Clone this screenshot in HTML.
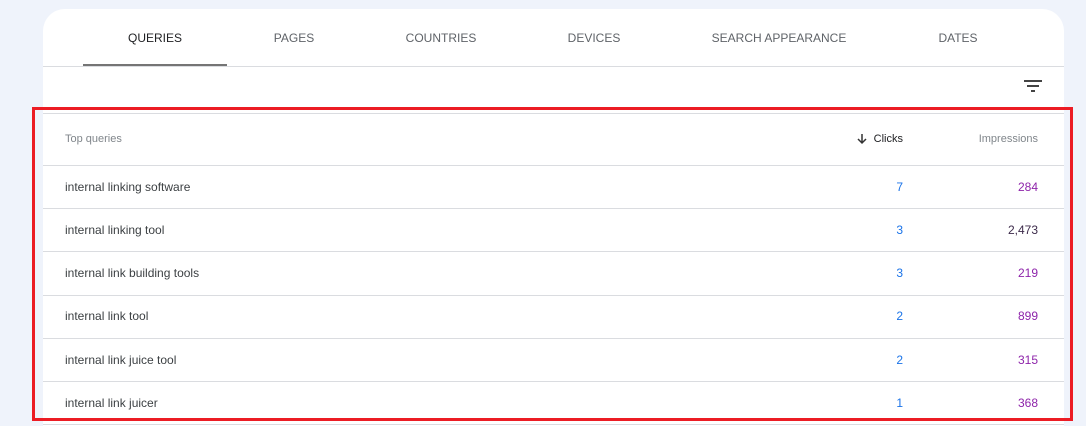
<!DOCTYPE html><html><head><style>
html,body{margin:0;width:1086px;height:426px;overflow:hidden}
body{background:#eff3fb;position:relative;font-family:"Liberation Sans",Arial,sans-serif}
.card{position:absolute;left:43px;top:9px;width:1021px;height:417px;background:#fff;border-radius:22px 22px 0 0}
.tab{position:absolute;top:31px;font-size:12px;color:#5f6368;letter-spacing:0;transform:translateX(-50%)}
.line{position:absolute;left:43px;width:1021px;height:1px;background:#dadce0}
.t{position:absolute;font-size:12px;color:#3c4043;left:65px}
.n{position:absolute;font-size:12px;text-align:right}
.red{position:absolute;left:32px;top:107px;width:1035px;height:308px;border:3px solid #ec1c24}
</style></head><body>
<div class="card"></div>
<div class="tab" style="left:155px;color:#202124">QUERIES</div>
<div class="tab" style="left:294px">PAGES</div>
<div class="tab" style="left:441px">COUNTRIES</div>
<div class="tab" style="left:594px">DEVICES</div>
<div class="tab" style="left:779px">SEARCH APPEARANCE</div>
<div class="tab" style="left:958px">DATES</div>
<div style="position:absolute;left:83px;top:64px;width:144px;height:2px;background:#757575"></div>
<div class="line" style="top:66px"></div>
<svg style="position:absolute;left:1024px;top:78px" width="18" height="14"><rect x="0" y="2" width="18" height="2" fill="#444"/><rect x="3" y="7" width="12" height="2" fill="#444"/><rect x="7" y="12" width="4" height="2" fill="#444"/></svg>
<div class="line" style="top:113px"></div>
<div class="t" style="top:133px;font-size:11px;color:#80868b">Top queries</div>
<svg style="position:absolute;left:856px;top:133px" width="12" height="12"><path d="M6 1v9M2 6l4 4 4-4" stroke="#333" stroke-width="1.5" fill="none"/></svg>
<div class="n" style="right:183px;top:133px;font-size:11px;color:#202124">Clicks</div>
<div class="n" style="right:48px;top:133px;font-size:11px;color:#80868b">Impressions</div>
<div class="line" style="top:165px"></div>
<div class="t" style="top:180px">internal linking software</div><div class="n" style="right:183px;top:180px;color:#1a73e8">7</div><div class="n" style="right:48px;top:180px;color:#8e24aa">284</div>
<div class="line" style="top:208px"></div>
<div class="t" style="top:223px">internal linking tool</div><div class="n" style="right:183px;top:223px;color:#1a73e8">3</div><div class="n" style="right:48px;top:223px;color:#3c2a4a">2,473</div>
<div class="line" style="top:251px"></div>
<div class="t" style="top:266px">internal link building tools</div><div class="n" style="right:183px;top:266px;color:#1a73e8">3</div><div class="n" style="right:48px;top:266px;color:#8e24aa">219</div>
<div class="line" style="top:295px"></div>
<div class="t" style="top:309px">internal link tool</div><div class="n" style="right:183px;top:309px;color:#1a73e8">2</div><div class="n" style="right:48px;top:309px;color:#8e24aa">899</div>
<div class="line" style="top:338px"></div>
<div class="t" style="top:353px">internal link juice tool</div><div class="n" style="right:183px;top:353px;color:#1a73e8">2</div><div class="n" style="right:48px;top:353px;color:#8e24aa">315</div>
<div class="line" style="top:381px"></div>
<div class="t" style="top:396px">internal link juicer</div><div class="n" style="right:183px;top:396px;color:#1a73e8">1</div><div class="n" style="right:48px;top:396px;color:#8e24aa">368</div>
<div class="line" style="top:424px"></div>
<div class="red"></div>
</body></html>
